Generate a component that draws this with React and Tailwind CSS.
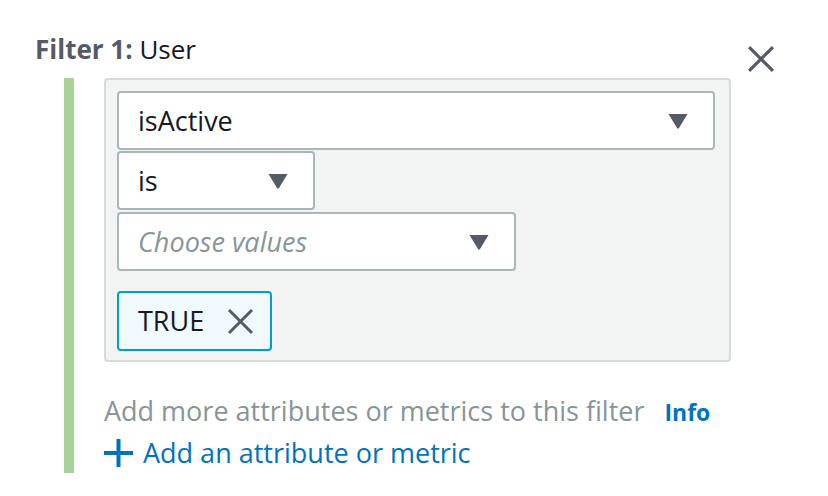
import React from 'react'

function Caret() {
  return (
    <svg width="20" height="16" viewBox="0 0 20 16" className="shrink-0">
      <path d="M0.5 1 L19.5 1 L11 15 Q10 16.5 9 15 Z" fill="#545b64" />
    </svg>
  )
}

function Cross({ size = 27, stroke = 3 }) {
  return (
    <svg width={size} height={size} viewBox="0 0 27 27" className="block shrink-0">
      <path d="M2 2 L25 25 M25 2 L2 25" stroke="#545b64" strokeWidth={stroke} />
    </svg>
  )
}

function Select({ width, children, placeholder }) {
  return (
    <div
      className={`${width} h-[59px] bg-white border-2 border-[#aab7b8] rounded-[4px] flex items-center justify-between pl-[19px] pr-[25px]`}
    >
      <span className={placeholder ? 'italic text-[#879596]' : 'text-[#16191f]'}>{children}</span>
      <Caret />
    </div>
  )
}

export default function App() {
  return (
    <div
      className="w-[828px] h-[496px] bg-white overflow-hidden pl-[35px] pt-[34px] text-[27px] leading-[30px]"
      style={{ fontFamily: '"Open Sans", "Noto Sans", sans-serif' }}
    >
      <div className="flex items-start justify-between pr-[53px] h-[30px]">
        <h2 className="text-[26px] text-[#16191f]">
          <span className="font-bold text-[#545b64]">Filter 1:</span> User
        </h2>
        <button className="mt-[11px]">
          <Cross size={28} stroke={3} />
        </button>
      </div>

      <div className="flex mt-[14px] ml-[29px]">
        <div className="w-[10px] h-[395px] bg-[#a8d29a]" />
        <div className="pl-[30px]">
          <div className="w-[627px] h-[284px] bg-[#f2f3f3] border-2 border-[#d5dbdb] rounded-[4px] pt-[11px] pl-[11px] pr-[14px] flex flex-col">
            <Select width="w-full">isActive</Select>
            <div className="mt-[1px]">
              <Select width="w-[198px]">is</Select>
            </div>
            <div className="mt-[2px]">
              <Select width="w-[399px]" placeholder>
                Choose values
              </Select>
            </div>
            <div className="mt-[20px] w-[155px] h-[60px] bg-[#f1faff] border-2 border-[#00a1c9] rounded-[4px] flex items-center pl-[19px] gap-[23px] text-[#16191f]">
              <span>TRUE</span>
              <Cross size={27} stroke={3} />
            </div>
          </div>

          <div className="mt-[34px] flex items-baseline text-[#879596]">
            <span>Add more attributes or metrics to this filter</span>
            <span className="ml-[20px] text-[23px] font-bold text-[#0073bb]">Info</span>
          </div>
          <div className="mt-[11px] flex items-center gap-[10px] text-[#0073bb]">
            <svg width="29" height="28" viewBox="0 0 29 28" className="shrink-0">
              <path d="M14.5 0 V28 M0 14 H29" stroke="#0073bb" strokeWidth="4" />
            </svg>
            <span>Add an attribute or metric</span>
          </div>
        </div>
      </div>
    </div>
  )
}
